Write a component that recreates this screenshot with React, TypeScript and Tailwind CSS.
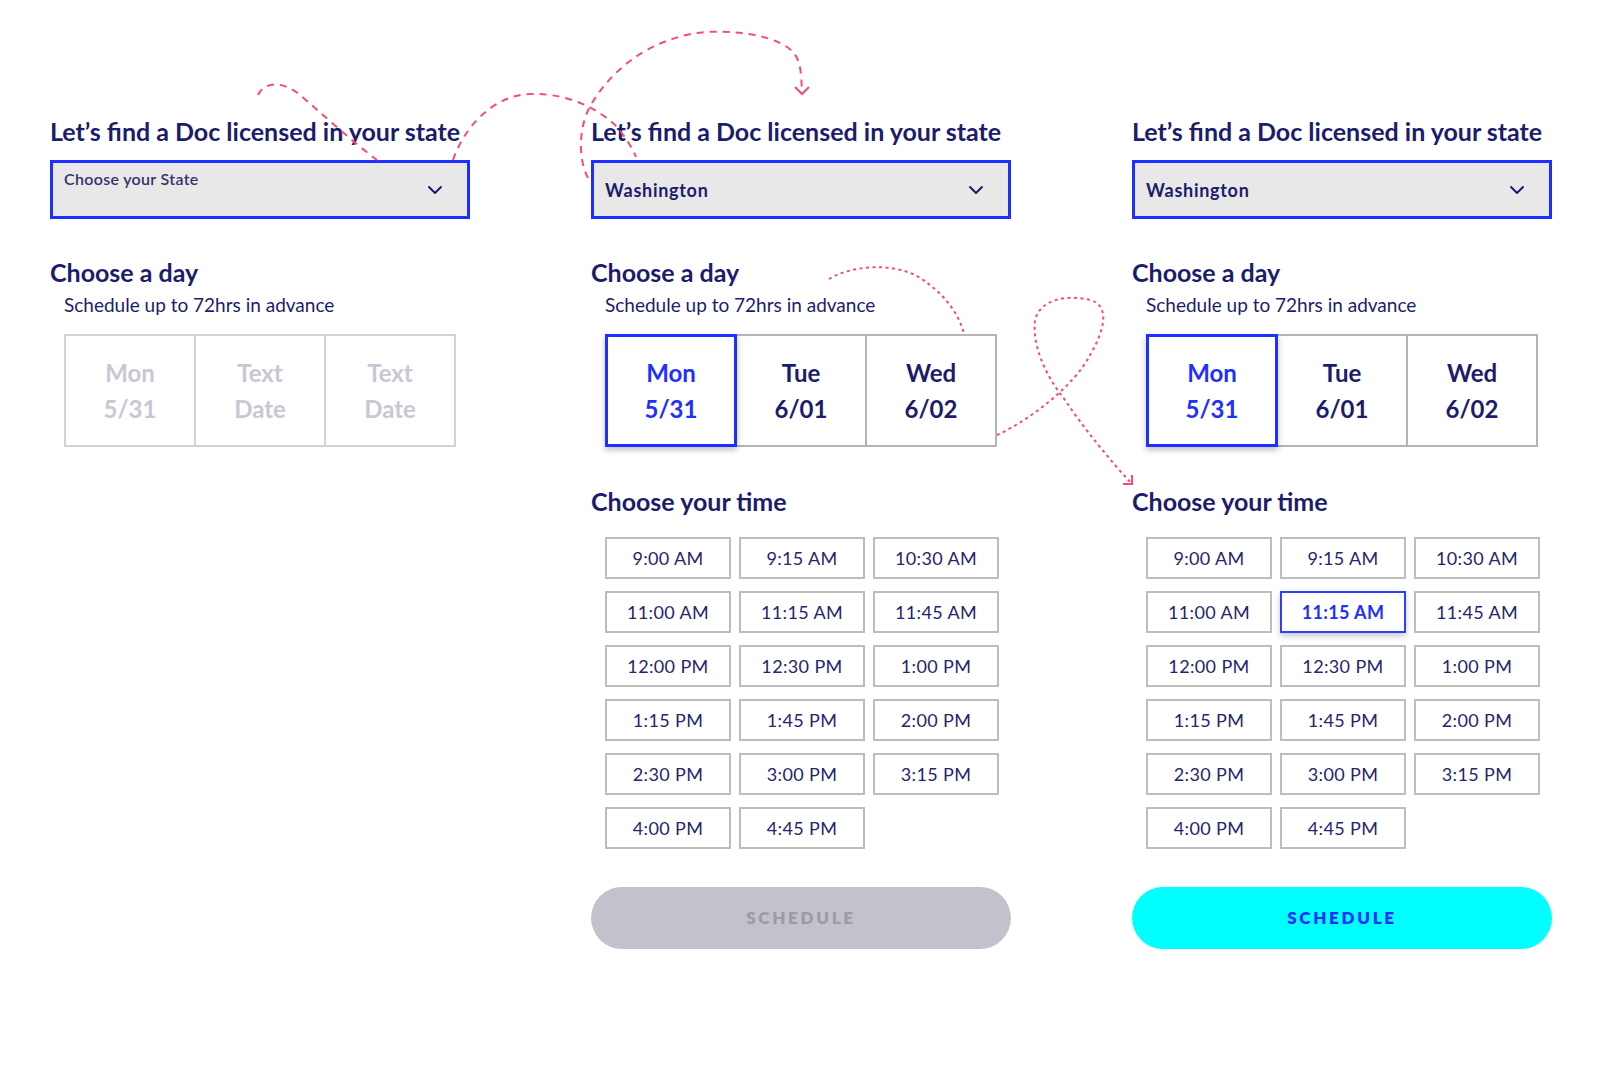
const times = [
  '9:00 AM',
  '9:15 AM',
  '10:30 AM',
  '11:00 AM',
  '11:15 AM',
  '11:45 AM',
  '12:00 PM',
  '12:30 PM',
  '1:00 PM',
  '1:15 PM',
  '1:45 PM',
  '2:00 PM',
  '2:30 PM',
  '3:00 PM',
  '3:15 PM',
  '4:00 PM',
  '4:45 PM',
]

const days = [
  { d: 'Mon', n: '5/31' },
  { d: 'Tue', n: '6/01' },
  { d: 'Wed', n: '6/02' },
]

function Chevron() {
  return (
    <svg width="16" height="10" viewBox="0 0 16 10" fill="none">
      <path d="M2 2l6 6 6-6" stroke="#1c1c6c" strokeWidth="2" strokeLinecap="round" strokeLinejoin="round" />
    </svg>
  )
}

function Column({ step }: { step: 1 | 2 | 3 }) {
  return (
    <div className="w-[420px] shrink-0">
      <h2 className="text-[25px] leading-[30px] font-bold text-[#1c1c6c] whitespace-nowrap">
        Let’s find a Doc licensed in your state
      </h2>

      {step === 1 ? (
        <div className="mt-[14px] h-[59px] border-[3px] border-[#1f2fff] bg-[#e8e8e8] flex justify-between pl-[11px] pr-[24px]">
          <span className="pt-[6px] text-[16px] leading-[20px] font-semibold tracking-[0.02em] text-[#34346a]">Choose your State</span>
          <span className="self-center">
            <Chevron />
          </span>
        </div>
      ) : (
        <div className="mt-[14px] h-[59px] border-[3px] border-[#1f2fff] bg-[#e8e8e8] flex items-center justify-between pl-[11px] pr-[24px]">
          <span className="pt-[2px] text-[18px] font-bold tracking-[0.04em] text-[#1c1c6c]">Washington</span>
          <Chevron />
        </div>
      )}

      <h3 className="mt-[39px] text-[25px] leading-[28px] font-bold text-[#1c1c6c]">Choose a day</h3>
      <p className="mt-[8px] pl-[14px] text-[19px] leading-[22px] text-[#1c1c6c]">Schedule up to 72hrs in advance</p>

      <div className="mt-[18px] ml-[14px] flex">
        {step === 1
          ? [
              ['Mon', '5/31'],
              ['Text', 'Date'],
              ['Text', 'Date'],
            ].map(([a, b], i) => (
              <div
                key={i}
                className={`w-[132px] h-[113px] border-2 border-[#d2d2da] flex flex-col items-center justify-center text-[24px] leading-[36px] font-bold text-[#c8c8d4] ${i > 0 ? '-ml-[2px]' : ''}`}
              >
                <span>{a}</span>
                <span>{b}</span>
              </div>
            ))
          : days.map((x, i) => (
              <div
                key={i}
                className={
                  i === 0
                    ? 'relative z-10 w-[132px] h-[113px] border-[3px] border-[#1f2fff] shadow-[0_3px_6px_rgba(0,0,0,0.25)] bg-white flex flex-col items-center justify-center text-[24px] leading-[36px] font-bold text-[#1f2fff]'
                    : 'w-[132px] h-[113px] -ml-[2px] border-2 border-[#b4b4b4] flex flex-col items-center justify-center text-[24px] leading-[36px] font-bold text-[#1c1c6c]'
                }
              >
                <span>{x.d}</span>
                <span>{x.n}</span>
              </div>
            ))}
      </div>

      {step > 1 && (
        <>
          <h3 className="mt-[40px] text-[25px] leading-[28px] font-bold text-[#1c1c6c]">Choose your time</h3>
          <div className="mt-[22px] ml-[14px] grid grid-cols-[126px_126px_126px] gap-x-[8px] gap-y-[12px]">
            {times.map((t) => {
              const on = step === 3 && t === '11:15 AM'
              return (
                <div
                  key={t}
                  className={
                    on
                      ? 'h-[42px] border-2 border-[#2f3dff] shadow-[0_3px_6px_rgba(0,0,0,0.22)] flex items-center justify-center text-[18px] font-bold tracking-[0.02em] text-[#1f2fff]'
                      : 'h-[42px] border-2 border-[#bdbdbd] flex items-center justify-center text-[18px] tracking-[0.02em] text-[#25256e]'
                  }
                >
                  {t}
                </div>
              )
            })}
          </div>
          <button
            className={
              step === 2
                ? 'mt-[38px] w-full h-[62px] rounded-full bg-[#c2c2cc] text-[17px] font-extrabold tracking-[0.16em] text-[#9c9ca2]'
                : 'mt-[38px] w-full h-[62px] rounded-full bg-[#00ffff] text-[17px] font-extrabold tracking-[0.16em] text-[#1f2fff]'
            }
          >
            SCHEDULE
          </button>
        </>
      )}
    </div>
  )
}

export default function App() {
  return (
    <div className="relative w-[1600px] h-[1066px] bg-white overflow-hidden font-['Lato','Noto_Sans',sans-serif]">
      <div className="flex gap-[121px] pl-[50px] pt-[116px]">
        <Column step={1} />
        <Column step={2} />
        <Column step={3} />
      </div>

      <svg className="absolute inset-0 pointer-events-none" width="1600" height="1066" fill="none">
        <g stroke="#fb4b70" strokeWidth="2" strokeDasharray="7 6" strokeLinecap="butt">
          <path d="M258 95 C264 82, 282 80, 300 95 S350 140, 377 160" />
          <path d="M453 160 C465 125, 495 95, 530 94 C570 93, 600 110, 617 127 C625 137, 632 147, 636 157" />
          <path d="M588 178 C578 160, 578 125, 592 103 C615 65, 655 37, 705 32 C745 30, 780 38, 793 52 C802 62, 801 78, 802 92" />
        </g>
        <path d="M795 87 L802 94 L809 87" stroke="#fb4b70" strokeWidth="2" />
        <g stroke="#fb4b70" strokeWidth="2" strokeDasharray="3 3.5">
          <path d="M829 279 C850 266, 890 262, 917 276 C940 290, 958 310, 964 334" />
          <path d="M997 435 C1030 420, 1075 385, 1090 355 C1105 330, 1110 305, 1090 300 C1065 294, 1040 300, 1035 320 C1032 345, 1045 375, 1065 400 C1085 430, 1110 460, 1130 482" />
        </g>
        <path d="M1123 484 L1132 484 L1132 475" stroke="#fb4b70" strokeWidth="2" />
      </svg>
    </div>
  )
}
